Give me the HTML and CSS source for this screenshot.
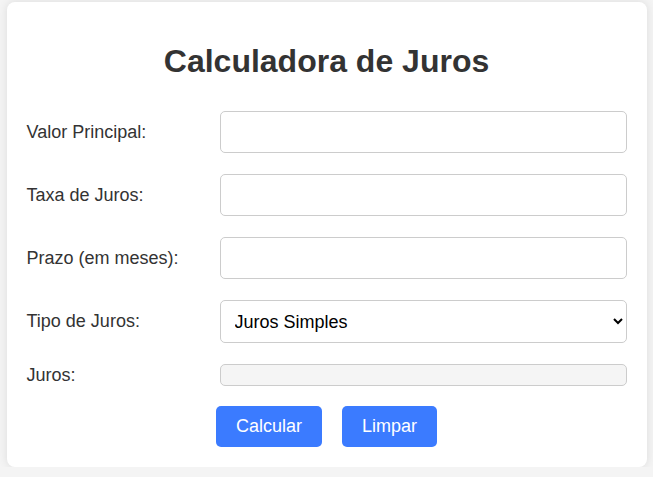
FILE: index.html
```html
<!DOCTYPE html>
<html lang="pt">
<head>
<meta charset="utf-8">
<title>Calculadora de Juros</title>
<link rel="stylesheet" href="styles.css">
</head>
<body>
<div class="card">
  <h1 class="title">Calculadora de Juros</h1>
  <form class="form">
    <label class="label" for="principal">Valor Principal:</label>
    <input class="field" id="principal" type="text">
    <label class="label" for="taxa">Taxa de Juros:</label>
    <input class="field" id="taxa" type="text">
    <label class="label" for="prazo">Prazo (em meses):</label>
    <input class="field" id="prazo" type="text">
    <label class="label" for="tipo">Tipo de Juros:</label>
    <select class="field select" id="tipo">
      <option>Juros Simples</option>
      <option>Juros Compostos</option>
    </select>
    <span class="label">Juros:</span>
    <div class="output"></div>
  </form>
  <div class="actions">
    <button class="btn" type="button">Calcular</button>
    <button class="btn" type="button">Limpar</button>
  </div>
</div>
</body>
</html>
```
FILE: styles.css
```css
html, body {
  margin: 0;
  padding: 0;
}
body {
  background: #f4f4f4;
  font-family: "Liberation Sans", Arial, sans-serif;
  color: #333;
  padding-top: 2px;
}
.card {
  width: 600px;
  margin: 0 auto;
  background: #fff;
  padding: 20px;
  border-radius: 8px;
  box-shadow: 0 0 10px rgba(0, 0, 0, 0.1);
}
.title {
  font-size: 32px;
  font-weight: bold;
  text-align: center;
  margin: 21px 0 31px;
  color: #333;
}
.form {
  display: grid;
  grid-template-columns: 193px 1fr;
  row-gap: 21px;
  align-items: center;
}
.label {
  font-size: 18px;
  color: #333;
}
.field {
  box-sizing: border-box;
  width: 100%;
  height: 42px;
  border: 1px solid #ccc;
  border-radius: 5px;
  padding: 10px;
  font-family: "Liberation Sans", Arial, sans-serif;
  font-size: 18px;
  background: #fff;
  color: #000;
}
.select {
  height: 43px;
}
.output {
  box-sizing: border-box;
  height: 22px;
  border: 1px solid #ccc;
  border-radius: 5px;
  background: #f5f5f5;
}
.actions {
  display: flex;
  justify-content: center;
  gap: 20px;
  margin-top: 20px;
}
.btn {
  background: #3b7bff;
  color: #fff;
  border: none;
  border-radius: 5px;
  padding: 0 20px;
  height: 41px;
  font-family: "Liberation Sans", Arial, sans-serif;
  font-size: 18px;
}
```
